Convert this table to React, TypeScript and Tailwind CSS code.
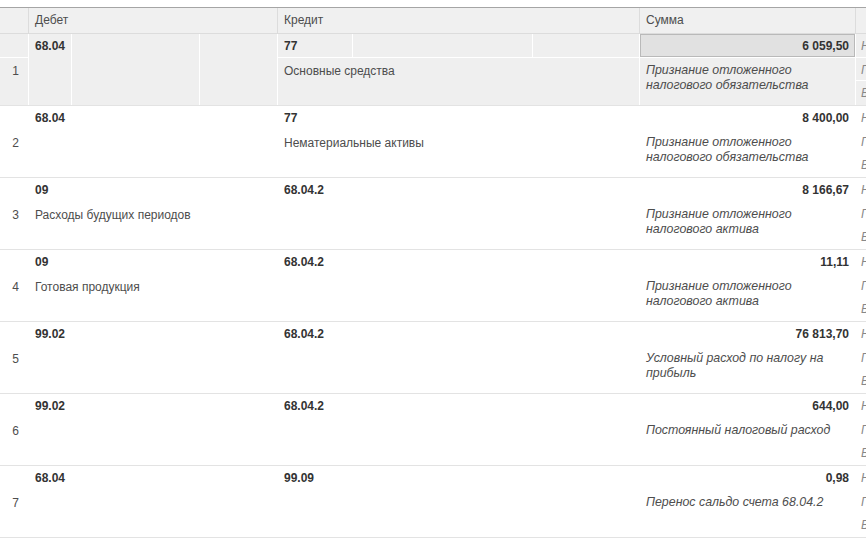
import React from "react";

type Entry = {
  dt: string;
  dtSub: string;
  kt: string;
  ktSub: string;
  sum: string;
  desc: string;
  tail: string[];
};

const entries: Entry[] = [
  {
    dt: "68.04",
    dtSub: "",
    kt: "77",
    ktSub: "Основные средства",
    sum: "6 059,50",
    desc: "Признание отложенного налогового обязательства",
    tail: ["Н", "П", "В"],
  },
  {
    dt: "68.04",
    dtSub: "",
    kt: "77",
    ktSub: "Нематериальные активы",
    sum: "8 400,00",
    desc: "Признание отложенного налогового обязательства",
    tail: ["Н", "П", "В"],
  },
  {
    dt: "09",
    dtSub: "Расходы будущих периодов",
    kt: "68.04.2",
    ktSub: "",
    sum: "8 166,67",
    desc: "Признание отложенного налогового актива",
    tail: ["Н", "П", "В"],
  },
  {
    dt: "09",
    dtSub: "Готовая продукция",
    kt: "68.04.2",
    ktSub: "",
    sum: "11,11",
    desc: "Признание отложенного налогового актива",
    tail: ["Н", "П", "В"],
  },
  {
    dt: "99.02",
    dtSub: "",
    kt: "68.04.2",
    ktSub: "",
    sum: "76 813,70",
    desc: "Условный расход по налогу на прибыль",
    tail: ["Н", "П", "В"],
  },
  {
    dt: "99.02",
    dtSub: "",
    kt: "68.04.2",
    ktSub: "",
    sum: "644,00",
    desc: "Постоянный налоговый расход",
    tail: ["Н", "П", "В"],
  },
  {
    dt: "68.04",
    dtSub: "",
    kt: "99.09",
    ktSub: "",
    sum: "0,98",
    desc: "Перенос сальдо счета 68.04.2",
    tail: ["Н", "П", "В"],
  },
];

function Row({ e, n, active }: { e: Entry; n: number; active: boolean }) {
  const bg = active ? "bg-[#efefef]" : "bg-white";
  const line = active ? "border-white" : "border-transparent";

  return (
    <div className={`flex h-[72px] border-b border-[#e3e3e3] ${bg}`}>
      {/* № */}
      <div className={`w-[29px] shrink-0 flex flex-col border-r ${line}`}>
        <div className={`h-[24px] border-b ${line}`} />
        <div className="flex-1 flex items-start justify-end pr-[9px] pt-[6px]">
          {n}
        </div>
      </div>

      {/* Дебет */}
      <div className={`w-[249px] shrink-0 flex border-r ${line}`}>
        <div className={`w-[43px] shrink-0 border-r ${line} flex flex-col`}>
          <div className="h-[24px] pl-[6px] pt-[5px] font-bold text-[#333] whitespace-nowrap">
            {e.dt}
          </div>
          <div className="relative z-10 pl-[6px] pt-[6px] whitespace-nowrap">
            {e.dtSub}
          </div>
        </div>
        <div className={`w-[128px] shrink-0 border-r ${line}`} />
        <div className="flex-1" />
      </div>

      {/* Кредит */}
      <div className={`w-[362px] shrink-0 flex flex-col border-r ${line}`}>
        <div className={`h-[24px] flex border-b ${line}`}>
          <div className={`w-[75px] shrink-0 border-r ${line} pl-[6px] pt-[5px] font-bold text-[#333]`}>
            {e.kt}
          </div>
          <div className={`w-[180px] shrink-0 border-r ${line}`} />
          <div className="flex-1" />
        </div>
        <div className="pl-[6px] pt-[6px]">{e.ktSub}</div>
      </div>

      {/* Сумма */}
      <div className={`w-[216px] shrink-0 flex flex-col border-r ${line}`}>
        {active ? (
          <div className="h-[24px] border-b border-white">
            <div className="h-[23px] border border-[#b9b9b9] bg-[#e1e1e1] text-right pr-[5px] pt-[4px] font-bold text-[#333]">
              {e.sum}
            </div>
          </div>
        ) : (
          <div className="h-[24px] text-right pr-[6px] pt-[5px] font-bold text-[#333]">
            {e.sum}
          </div>
        )}
        <div className="pl-[6px] pt-[5px] pr-[6px] italic text-[12.4px] leading-[15px]">
          {e.desc}
        </div>
      </div>

      {/* хвост */}
      <div className="flex-1 flex flex-col italic text-[#888] overflow-hidden">
        {e.tail.map((t, i) => (
          <div
            key={i}
            className={`h-[24px] pl-[5px] pt-[5px] whitespace-nowrap ${i < 2 ? `border-b ${line}` : ""}`}
          >
            {t}
          </div>
        ))}
      </div>
    </div>
  );
}

export default function App() {
  return (
    <div
      className="w-[866px] h-[544px] overflow-hidden bg-white text-[12px] leading-[15px] text-[#4d4d4d]"
      style={{ fontFamily: '"Liberation Sans", Arial, sans-serif' }}
    >
      <div className="h-[7px]" />
      {/* Header */}
      <div className="flex h-[27px] border-t border-[#a5a5a5] border-b border-b-[#dcdcdc] bg-[#f0f0f0]">
        <div className="w-[29px] shrink-0 border-r border-[#dcdcdc]" />
        <div className="w-[249px] shrink-0 border-r border-[#dcdcdc] pl-[6px] pt-[5px]">Дебет</div>
        <div className="w-[362px] shrink-0 border-r border-[#dcdcdc] pl-[6px] pt-[5px]">Кредит</div>
        <div className="w-[216px] shrink-0 border-r border-[#dcdcdc] pl-[6px] pt-[5px]">Сумма</div>
        <div className="flex-1" />
      </div>

      {entries.map((e, i) => (
        <Row key={i} e={e} n={i + 1} active={i === 0} />
      ))}
    </div>
  );
}
